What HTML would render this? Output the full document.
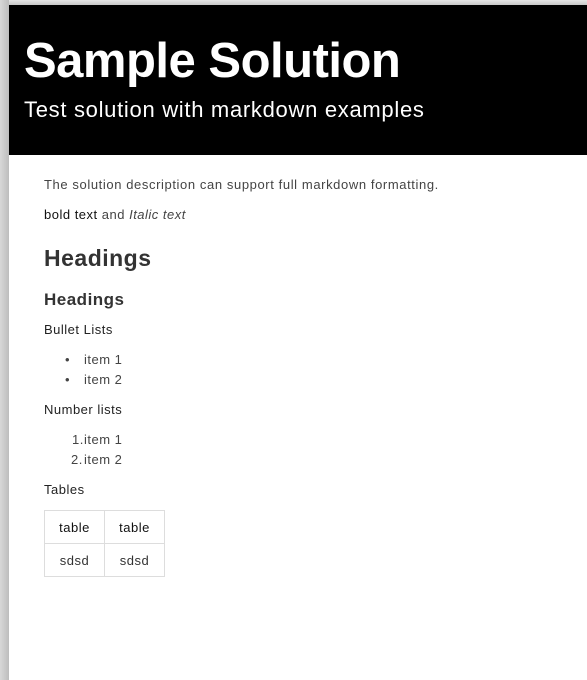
<!DOCTYPE html>
<html><head><style>
html,body{margin:0;padding:0;width:587px;height:680px;overflow:hidden;background:#fff;font-family:"Liberation Sans",sans-serif;}
.shadow{position:absolute;left:0;top:0;width:9px;height:680px;background:linear-gradient(to right,#d8d8d8,#bdbdbd);}
.shtop{position:absolute;left:0;top:0;width:587px;height:5px;background:linear-gradient(to bottom,#e6e6e6,#c8c8c8);}
.hdr{position:absolute;left:9px;top:5px;width:578px;height:150px;background:#000;color:#fff;}
.hdr h1{position:absolute;left:15px;top:28px;margin:0;font-size:49px;font-weight:bold;line-height:56px;letter-spacing:-0.5px;}
.hdr p{position:absolute;left:15px;top:92px;margin:0;font-size:22px;line-height:26px;letter-spacing:0.7px;}
.t{position:absolute;white-space:nowrap;letter-spacing:0.5px;}
table{position:absolute;left:44px;top:510px;border-collapse:collapse;font-size:13px;color:#333;letter-spacing:0.5px;}
td{border:1px solid #ddd;width:59px;height:32px;text-align:center;padding:0;}
</style></head><body>
<div class="shtop"></div><div class="shadow"></div>
<div class="hdr"><h1>Sample Solution</h1><p>Test solution with markdown examples</p></div>
<div class="t" style="left:44px;top:177px;font-size:13px;color:#444;letter-spacing:0.6px">The solution description can support full markdown formatting.</div>
<div class="t" style="left:44px;top:207px;font-size:13px;color:#444"><b style="font-weight:normal;color:#111">bold text</b> and <i>Italic text</i></div>
<div class="t" style="left:44px;top:245px;font-size:23px;font-weight:bold;color:#333">Headings</div>
<div class="t" style="left:44px;top:290px;font-size:17px;font-weight:bold;color:#333">Headings</div>
<div class="t" style="left:44px;top:322px;font-size:13px;color:#222">Bullet Lists</div>
<div class="t" style="left:65px;top:352px;font-size:13px;color:#444">•</div>
<div class="t" style="left:84px;top:352px;font-size:13px;color:#444">item 1</div>
<div class="t" style="left:65px;top:372px;font-size:13px;color:#444">•</div>
<div class="t" style="left:84px;top:372px;font-size:13px;color:#444">item 2</div>
<div class="t" style="left:44px;top:402px;font-size:13px;color:#222">Number lists</div>
<div class="t" style="left:72px;top:432px;font-size:13px;color:#444">1.</div>
<div class="t" style="left:84px;top:432px;font-size:13px;color:#444">item 1</div>
<div class="t" style="left:71px;top:452px;font-size:13px;color:#444">2.</div>
<div class="t" style="left:84px;top:452px;font-size:13px;color:#444">item 2</div>
<div class="t" style="left:44px;top:482px;font-size:13px;color:#222">Tables</div>
<table><tr><td style="color:#111">table</td><td style="color:#111">table</td></tr><tr><td>sdsd</td><td>sdsd</td></tr></table>
</body></html>
